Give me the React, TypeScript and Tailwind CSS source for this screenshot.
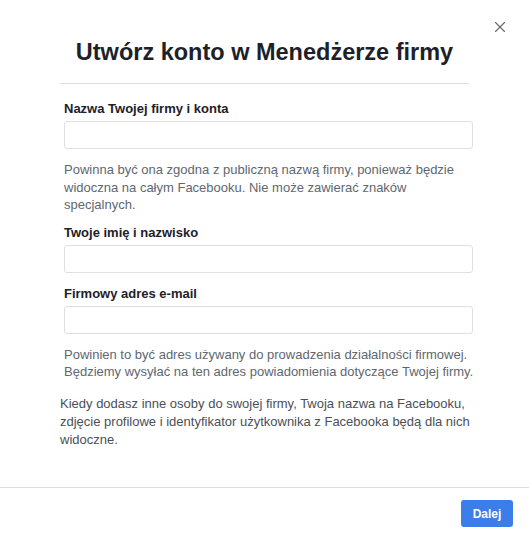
import { X } from 'lucide-react';

function Field({ label, help, className = '' }: { label: string; help?: string[]; className?: string }) {
  return (
    <div className={`flex flex-col ${className}`}>
      <label className="text-[13px] font-bold leading-[16px] text-[#1d2129]">{label}</label>
      <input
        type="text"
        className="mt-[4px] h-[28px] w-full rounded-[3px] border border-[#dddfe2] bg-white px-2 text-[12px] outline-none"
      />
      {help && (
        <p className="mt-[12px] text-[13px] leading-[17.5px] text-[#606770]">
          {help.map((line, i) => (
            <span key={i} className="block whitespace-nowrap">
              {line}
            </span>
          ))}
        </p>
      )}
    </div>
  );
}

export default function App() {
  return (
    <div className="flex h-[539px] w-[529px] flex-col bg-white font-['Liberation_Sans',Arial,sans-serif]">
      <div className="relative flex-1">
        <button type="button" className="absolute right-[20px] top-[18px] text-[#606770]" aria-label="Zamknij">
          <X size={18} strokeWidth={1.5} />
        </button>
        <h1 className="pt-[36px] text-center text-[23.5px] font-bold leading-[32px] text-[#1d2129]">
          Utwórz konto w Menedżerze firmy
        </h1>
        <div className="mx-[60px] mt-[15px] border-t border-[#dadde1]" />
        <div className="flex flex-col gap-[11px] pl-[64px] pr-[56px] pt-[17px]">
          <Field
            label="Nazwa Twojej firmy i konta"
            help={[
              'Powinna być ona zgodna z publiczną nazwą firmy, ponieważ będzie',
              'widoczna na całym Facebooku. Nie może zawierać znaków',
              'specjalnych.',
            ]}
          />
          <Field label="Twoje imię i nazwisko" />
          <Field
            className="mt-[2px]"
            label="Firmowy adres e-mail"
            help={[
              'Powinien to być adres używany do prowadzenia działalności firmowej.',
              'Będziemy wysyłać na ten adres powiadomienia dotyczące Twojej firmy.',
            ]}
          />
        </div>
        <p className="mt-[14px] pl-[60px] pr-[40px] text-[13px] leading-[18px] text-[#4b4f56]">
          <span className="block whitespace-nowrap">Kiedy dodasz inne osoby do swojej firmy, Twoja nazwa na Facebooku,</span>
          <span className="block whitespace-nowrap">zdjęcie profilowe i identyfikator użytkownika z Facebooka będą dla nich</span>
          <span className="block">widoczne.</span>
        </p>
      </div>
      <div className="flex h-[52px] items-center justify-end border-t border-[#dadde1] pr-[16px]">
        <button
          type="button"
          className="h-[27px] w-[52px] rounded-[3px] bg-[#3b7de9] text-[12px] font-bold text-white"
        >
          Dalej
        </button>
      </div>
    </div>
  );
}
